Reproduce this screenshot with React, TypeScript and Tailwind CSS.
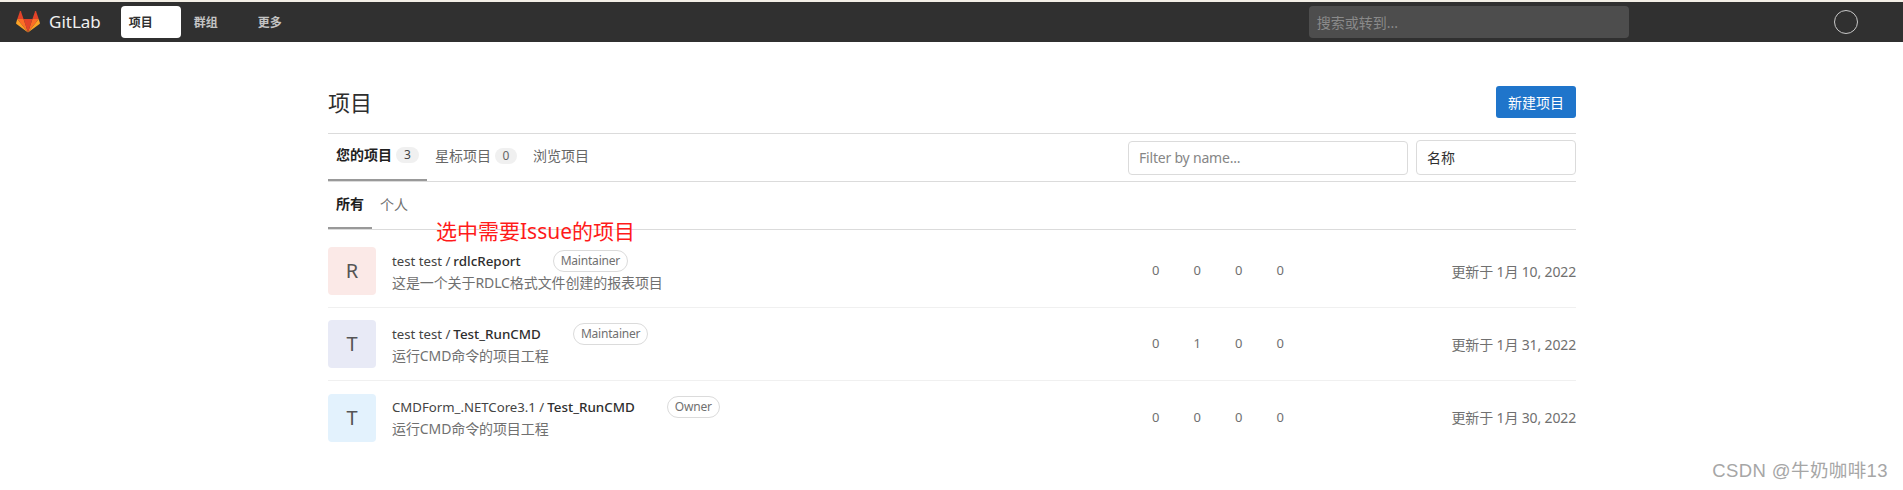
import React from "react";

const font = { fontFamily: '"Noto Sans", "Noto Sans CJK SC", sans-serif' };

const Logo = () => (
  <svg width="24" height="22" viewBox="0 0 26 24" preserveAspectRatio="none" aria-hidden="true">
    <path d="M13 23.5 L17.8 8.8 H8.2 Z" fill="#e24329" />
    <path d="M13 23.5 L8.2 8.8 H1.4 Z" fill="#fc6d26" />
    <path d="M1.4 8.8 L0.1 13 C0 13.4 0.1 13.8 0.5 14.1 L13 23.5 Z" fill="#fca326" />
    <path d="M1.4 8.8 H8.2 L5.3 0.4 C5.1 -0.1 4.5 -0.1 4.3 0.4 Z" fill="#e24329" />
    <path d="M13 23.5 L17.8 8.8 H24.6 Z" fill="#fc6d26" />
    <path d="M24.6 8.8 L25.9 13 C26 13.4 25.9 13.8 25.5 14.1 L13 23.5 Z" fill="#fca326" />
    <path d="M24.6 8.8 H17.8 L20.7 0.4 C20.9 -0.1 21.5 -0.1 21.7 0.4 Z" fill="#e24329" />
  </svg>
);

const rows = [
  { letter: "R", bg: "bg-[#fbe9e7]", ns: "test test / ", name: "rdlcReport", role: "Maintainer", desc: "这是一个关于RDLC格式文件创建的报表项目", stats: [0, 0, 0, 0], date: "更新于 1月 10, 2022" },
  { letter: "T", bg: "bg-[#e8eaf6]", ns: "test test / ", name: "Test_RunCMD", role: "Maintainer", desc: "运行CMD命令的项目工程", stats: [0, 1, 0, 0], date: "更新于 1月 31, 2022" },
  { letter: "T", bg: "bg-[#e3f2fd]", ns: "CMDForm_.NETCore3.1 / ", name: "Test_RunCMD", role: "Owner", desc: "运行CMD命令的项目工程", stats: [0, 0, 0, 0], date: "更新于 1月 30, 2022" },
];

export default function App() {
  return (
    <div className="relative h-[490px] w-[1903px] overflow-hidden bg-white text-[14px] text-[#2e2e2e]" style={font}>
      <div className="h-[2px] bg-[#f3efe6]" />
      <header className="flex h-[40px] items-center bg-[#303030]">
        <div className="ml-[16px] flex items-center">
          <Logo />
          <span className="ml-[9px] text-[17px] text-[#f0f0f0]">GitLab</span>
        </div>
        <nav className="ml-[20px] flex items-center text-[12px] font-bold">
          <div className="flex h-[32px] w-[60px] items-center rounded-[4px] bg-white pl-[8px] pt-[1px] text-[#303030]">项目</div>
          <div className="ml-[13px] w-[64px] pt-[1px] text-[#c4c4c4]">群组</div>
          <div className="w-[40px] pt-[1px] text-[#c4c4c4]">更多</div>
        </nav>
        <div className="ml-[1011px] flex h-[32px] w-[320px] items-center rounded-[4px] bg-[#4d4d4d] pl-[8px] text-[14px] text-[#8a8a8a]">搜索或转到...</div>
        <div className="ml-[205px] h-[24px] w-[24px] rounded-full border border-[#c8c8c8]" />
      </header>

      <main className="ml-[328px] w-[1248px]">
        <div className="flex h-[91px] items-center justify-between pb-[15px] pt-[44px]">
          <h1 className="text-[22px] font-normal text-[#2e2e2e]">项目</h1>
          <button className="h-[32px] w-[80px] rounded-[3px] bg-[#1f75cb] text-[14px] text-white">新建项目</button>
        </div>

        <div className="flex h-[49px] items-stretch justify-between border-y border-[#dbdbdb]">
          <div className="flex items-stretch">
            <div className="flex w-[99px] items-center border-b-2 border-[#999] pb-[4px] pl-[8px] font-bold text-[#1f1f1f]">
              您的项目
              <span className="ml-[4px] flex h-[16px] w-[23px] items-center justify-center rounded-full bg-[#f0f0f0] text-[12px] font-normal text-[#444]">3</span>
            </div>
            <div className="ml-[8px] flex items-center pb-[4px] text-[#666]">
              星标项目
              <span className="ml-[4px] flex h-[16px] w-[22px] items-center justify-center rounded-full bg-[#f0f0f0] text-[12px] text-[#666]">0</span>
            </div>
            <div className="ml-[16px] flex items-center pb-[4px] text-[#666]">浏览项目</div>
          </div>
          <div className="flex items-center">
            <div className="flex h-[34px] w-[280px] items-center rounded-[4px] border border-[#dbdbdb] pl-[10px] tracking-[-0.2px] text-[#868686]">Filter by name...</div>
            <div className="ml-[8px] flex h-[35px] w-[160px] items-center rounded-[4px] border border-[#dbdbdb] pl-[10px] text-[#303030]">名称</div>
          </div>
        </div>

        <div className="flex h-[48px] border-b border-[#dbdbdb]">
          <div className="flex w-[44px] items-center justify-center border-b-2 border-[#999] pb-[2px] font-bold text-[#1f1f1f]">所有</div>
          <div className="ml-[8px] flex items-center pb-[2px] text-[#707070]">个人</div>
        </div>

        <div className="pt-[5px]">
          {rows.map((r, i) => (
            <div key={i} className={`flex h-[73px] items-center ${i < 2 ? "border-b border-[#f0f0f0]" : ""}`}>
              <div className={`flex h-[48px] w-[48px] shrink-0 items-center justify-center rounded-[4px] ${r.bg} text-[20px] text-[#555]`}>{r.letter}</div>
              <div className="ml-[16px] w-[760px] pt-[1px] leading-[22px]">
                <div className="flex h-[22px] items-center text-[13.2px]">
                  <span className="text-[#444]">{r.ns}</span>
                  <span className="ml-[3px] text-[13.4px] font-medium text-[#2e2e2e]">{r.name}</span>
                  <span className="ml-[32px] flex h-[22px] items-center rounded-full border border-[#dbdbdb] px-[7px] text-[12px] tracking-[-0.2px] text-[#707070]">{r.role}</span>
                </div>
                <div className="text-[14px] tracking-[-0.1px] text-[#707070]">{r.desc}</div>
              </div>
              <div className="flex w-[166px] text-[13px] text-[#707070]">
                {r.stats.map((s, j) => (
                  <span key={j} className="w-[41.5px]">{s}</span>
                ))}
              </div>
              <div className="ml-auto text-[14px] tracking-[-0.15px] text-[#707070]">{r.date}</div>
            </div>
          ))}
        </div>
      </main>

      <div className="absolute left-[436px] top-[217px] text-[21px] leading-[28px] text-[#ff1a1a]">选中需要Issue的项目</div>
      <div className="absolute right-[15px] top-[459px] text-[18.5px] leading-[24px] tracking-[0.4px] text-[#a6a6a6]" style={{ fontFamily: '"Liberation Sans", "Noto Sans CJK SC", sans-serif' }}>CSDN @牛奶咖啡13</div>
    </div>
  );
}
